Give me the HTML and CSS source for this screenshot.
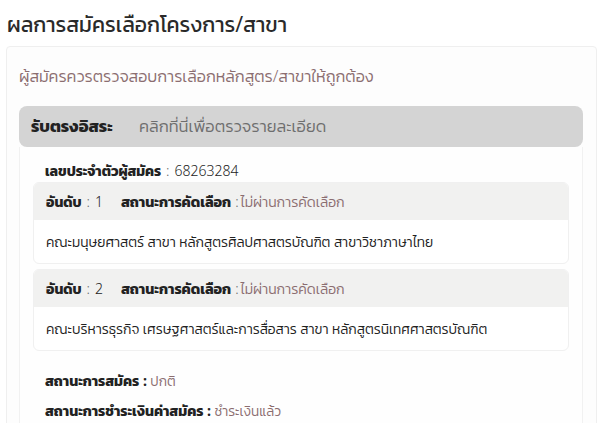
FILE: index.html
```html
<!DOCTYPE html>
<html lang="th">
<head>
<meta charset="utf-8">
<link rel="stylesheet" href="styles.css">
</head>
<body>
<h1 class="title">ผลการสมัครเลือกโครงการ/สาขา</h1>
<div class="card">
  <p class="notice">ผู้สมัครควรตรวจสอบการเลือกหลักสูตร/สาขาให้ถูกต้อง</p>
  <div class="acc-head">
    <span class="acc-name">รับตรงอิสระ</span>
    <span class="acc-link">คลิกที่นี่เพื่อตรวจรายละเอียด</span>
  </div>
  <div class="acc-body">
    <p class="line"><b>เลขประจำตัวผู้สมัคร</b><span class="sep">:</span>68263284</p>
    <div class="rank">
      <div class="rank-head"><b>อันดับ</b><span class="sep">:</span>1<span class="gap"></span><b class="wide">สถานะการคัดเลือก</b><span class="sep sep-tight">:</span><span class="val">ไม่ผ่านการคัดเลือก</span></div>
      <div class="rank-body">คณะมนุษยศาสตร์ สาขา หลักสูตรศิลปศาสตรบัณฑิต สาขาวิชาภาษาไทย</div>
    </div>
    <div class="rank">
      <div class="rank-head"><b>อันดับ</b><span class="sep">:</span>2<span class="gap"></span><b class="wide">สถานะการคัดเลือก</b><span class="sep sep-tight">:</span><span class="val">ไม่ผ่านการคัดเลือก</span></div>
      <div class="rank-body">คณะบริหารธุรกิจ เศรษฐศาสตร์และการสื่อสาร สาขา หลักสูตรนิเทศศาสตรบัณฑิต</div>
    </div>
    <div class="statuses">
      <p class="status"><b class="wide">สถานะการสมัคร :</b> <span class="val">ปกติ</span></p>
      <p class="status"><b class="wide">สถานะการชำระเงินค่าสมัคร :</b> <span class="val">ชำระเงินแล้ว</span></p>
    </div>
  </div>
</div>
</body>
</html>
```
FILE: styles.css
```css
html, body {
  margin: 0;
  padding: 0;
  background: #ffffff;
  overflow: hidden;
}
body {
  font-family: "Noto Sans", "Kanit", "Noto Sans Thai", sans-serif;
  font-weight: 300;
  color: #222;
  font-size: 13px;
  padding: 0 13px 0 6px;
  height: 423px;
}
b { font-weight: 700; }
.title {
  margin: 0;
  padding: 9px 0 0 1px;
  height: 37px;
  font-size: 21.2px;
  font-weight: 400;
  color: #2a2a2a;
}
.card {
  border: 1px solid #efefef;
  border-radius: 4px;
  background: #fdfdfd;
  padding: 0 13px 0 12px;
  height: 400px;
}
.notice {
  margin: 0;
  padding: 19px 0 0 0;
  height: 40px;
  line-height: 20px;
  color: #8b6d70;
  font-size: 16.2px;
}
.acc-head {
  background: #d4d4d4;
  border-radius: 8px;
  height: 41px;
  display: flex;
  align-items: center;
  padding-left: 12px;
  font-size: 16.5px;
}
.acc-name {
  font-weight: 700;
  color: #222;
  width: 108px;
}
.acc-link {
  color: #6e6e6e;
}
.acc-body {
  border: 1px solid #f1f1f1;
  border-top: none;
  padding: 13px 13px 0 13px;
  background: #fefefe;
  height: 300px;
}
.line {
  margin: 0 0 0 12px;
  height: 22px;
  line-height: 22px;
}
.line, .rank-head { font-size: 14px; }
.line b { font-size: 14px; }
.rank-head b { font-size: 14px; }
.rank-head b.wide { font-size: 14.3px; }
.sep { color: #666; margin: 0 5px; }
.sep-tight { margin: 0 2px 0 4px; }
.val { color: #8b6d70; font-size: 14px; }
.gap { display: inline-block; width: 18px; }
.rank {
  border: 1px solid #f0f0f0;
  border-radius: 6px;
  margin-bottom: 5px;
  overflow: hidden;
  background: #fff;
}
.rank-head {
  background: #f1f1f0;
  height: 37px;
  line-height: 37px;
  padding-left: 12px;
}
.rank-body {
  height: 43px;
  line-height: 43px;
  padding-left: 12px;
  font-size: 13.8px;
}
.statuses {
  padding-top: 10px;
}
.status {
  margin: 0;
  padding-left: 12px;
  height: 30px;
  line-height: 30px;
}
.status b.wide { font-size: 14.2px; }
.status .val { font-size: 13.6px; }
```
